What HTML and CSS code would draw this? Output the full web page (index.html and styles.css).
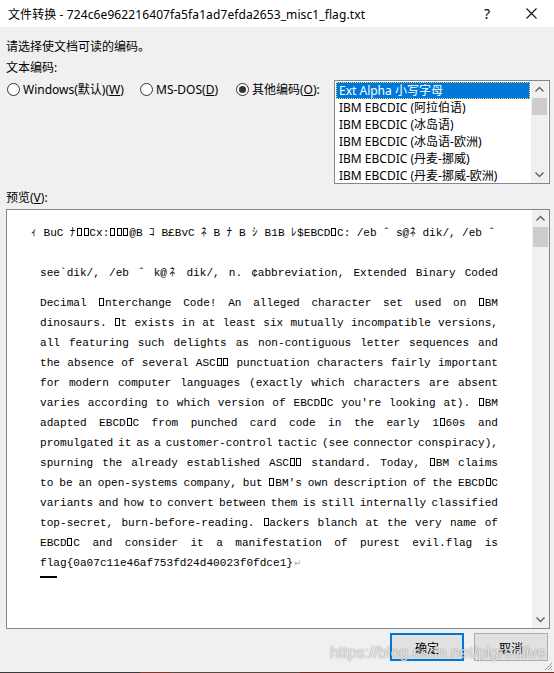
FILE: index.html
```html
<!DOCTYPE html>
<html lang="zh">
<head>
<meta charset="utf-8">
<title>文件转换</title>
<link rel="stylesheet" href="styles.css">
</head>
<body>
<div class="win">
  <div class="titlebar">
    <span class="title">文件转换 - 724c6e962216407fa5fa1ad7efda2653_misc1_flag.txt</span>
    <span class="help">?</span>
    <span class="close"><svg width="11" height="11" viewBox="0 0 11 11"><path d="M0.5 0.5L10.5 10.5M10.5 0.5L0.5 10.5" stroke="#111" stroke-width="1.1" fill="none"/></svg></span>
  </div>
  <div class="body">
    <div class="lbl l1">请选择使文档可读的编码。</div>
    <div class="lbl l2">文本编码:</div>
    <div class="row">
      <div class="radios">
        <div class="opt o1"><span class="rb"></span><span>Windows(默认)(<u>W</u>)</span></div>
        <div class="opt o2"><span class="rb"></span><span>MS-DOS(<u>D</u>)</span></div>
        <div class="opt o3"><span class="rb on"></span><span>其他编码(<u>O</u>):</span></div>
      </div>
      <div class="listbox">
        <div class="items">
          <div class="item sel">Ext Alpha 小写字母</div>
          <div class="item">IBM EBCDIC (阿拉伯语)</div>
          <div class="item">IBM EBCDIC (冰岛语)</div>
          <div class="item">IBM EBCDIC (冰岛语-欧洲)</div>
          <div class="item">IBM EBCDIC (丹麦-挪威)</div>
          <div class="item">IBM EBCDIC (丹麦-挪威-欧洲)</div>
        </div>
        <div class="sb sb-list">
          <svg class="arr" width="17" height="17" viewBox="0 0 17 17"><path d="M4.5 10.5L8.5 6.5L12.5 10.5" stroke="#606060" stroke-width="1.4" fill="none"/></svg>
          <div class="thumb t-list"></div>
          <div class="fill"></div>
          <svg class="arr" width="17" height="17" viewBox="0 0 17 17"><path d="M4.5 6.5L8.5 10.5L12.5 6.5" stroke="#606060" stroke-width="1.4" fill="none"/></svg>
        </div>
      </div>
    </div>
    <div class="lbl l3">预览(<u>V</u>):</div>
    <div class="preview">
      <div class="pv">
        <div class="ln first">ｨ BuC ﾅ<span class="tb"></span><span class="tb"></span>Cx:<span class="tb"></span><span class="tb"></span><span class="tb"></span>@B ｺ B£BvC ﾈ B ﾅ B ｼ B1B ﾚ$EBCD<span class="tb"></span>C: /eb ˆ s@ﾈ dik/, /eb ˆ</div>
        <div class="ln second">see`dik/, /eb ˆ k@ﾈ dik/, n. ¢abbreviation, Extended Binary Coded</div>
        <div class="ln">Decimal <span class="tb"></span>nterchange Code! An alleged character set used on <span class="tb"></span>BM</div>
        <div class="ln">dinosaurs. <span class="tb"></span>t exists in at least six mutually incompatible versions,</div>
        <div class="ln">all featuring such delights as non-contiguous letter sequences and</div>
        <div class="ln">the absence of several ASC<span class="tb"></span><span class="tb"></span> punctuation characters fairly important</div>
        <div class="ln">for modern computer languages (exactly which characters are absent</div>
        <div class="ln">varies according to which version of EBCD<span class="tb"></span>C you're looking at). <span class="tb"></span>BM</div>
        <div class="ln">adapted EBCD<span class="tb"></span>C from punched card code in the early 1<span class="tb"></span>60s and</div>
        <div class="ln tight3">promulgated it as a customer-control tactic (see connector conspiracy),</div>
        <div class="ln">spurning the already established ASC<span class="tb"></span><span class="tb"></span> standard. Today, <span class="tb"></span>BM claims</div>
        <div class="ln tight1">to be an open-systems company, but <span class="tb"></span>BM's own description of the EBCD<span class="tb"></span>C</div>
        <div class="ln tight2">variants and how to convert between them is still internally classified</div>
        <div class="ln">top-secret, burn-before-reading. <span class="tb"></span>ackers blanch at the very name of</div>
        <div class="ln">EBCD<span class="tb"></span>C and consider it a manifestation of purest evil.flag is</div>
        <div class="ln last">flag{0a07c11e46af753fd24d40023f0fdce1}<span class="ret">↵</span></div>
        <div class="caret"></div>
      </div>
      <div class="sb sb-pv">
        <svg class="arr" width="17" height="17" viewBox="0 0 17 17"><path d="M4.5 10.5L8.5 6.5L12.5 10.5" stroke="#606060" stroke-width="1.4" fill="none"/></svg>
        <div class="thumb t-pv"></div>
        <div class="fill"></div>
        <svg class="arr" width="17" height="17" viewBox="0 0 17 17"><path d="M4.5 6.5L8.5 10.5L12.5 6.5" stroke="#606060" stroke-width="1.4" fill="none"/></svg>
      </div>
    </div>
    <div class="buttons">
      <div class="btn def">确定</div>
      <div class="btn">取消</div>
    </div>
  </div>
  <div class="watermark">https://blog.csdn.net/pigredlive</div>
  <svg class="grip" width="9" height="9" viewBox="0 0 9 9"><path d="M8 1L1 8M8 4L4 8M8 7L7 8" stroke="#9a9a9a" stroke-width="1" fill="none"/></svg>
  <div class="edge"></div>
</div>
</body>
</html>
```
FILE: styles.css
```css
* { box-sizing: border-box; }
html, body { margin: 0; padding: 0; }
body {
  width: 554px;
  height: 673px;
  overflow: hidden;
  background: #f0f0f0;
  font-family: "Noto Sans", "Noto Sans CJK SC", sans-serif;
  font-size: 12px;
  color: #000;
}
.win { position: relative; width: 554px; height: 673px; display: flex; flex-direction: column; }
.titlebar {
  height: 27px;
  background: #fff;
  display: flex;
  align-items: center;
  padding-left: 8px;
  flex-shrink: 0;
}
.title { flex: 1; font-size: 12px; white-space: nowrap; letter-spacing: 0.1px; }
.help { width: 14px; font-size: 14px; margin-right: 32px; text-align: center; }
.close { width: 11px; height: 11px; margin-right: 17px; display: flex; }
.body { padding: 0 4px 0 6px; flex: 1; display: flex; flex-direction: column; }
.lbl { height: 21px; line-height: 21px; white-space: nowrap; }
.l1 { margin-top: 9px; }
.l2 { margin-bottom: 2px; }
.l3 { margin-top: 4px; height: 20px; line-height: 20px; margin-bottom: 1px; }
.row { display: flex; height: 104px; }
.radios { width: 328px; display: flex; height: 18px; align-items: center; }
.opt { display: flex; align-items: center; gap: 3px; white-space: nowrap; }
.o1 { margin-left: 1px; width: 133px; }
.o2 { width: 96px; }
.rb {
  width: 13px; height: 13px; border: 1px solid #333; border-radius: 50%;
  background: #fff; display: flex; align-items: center; justify-content: center;
  flex-shrink: 0;
}
.rb.on::after { content: ""; width: 7px; height: 7px; border-radius: 50%; background: #333; }
.listbox {
  width: 216px; height: 104px; border: 1px solid #828790; background: #fff;
  display: flex; padding: 1px 1px 1px 1px;
}
.items { flex: 1; overflow: hidden; }
.item { height: 17px; line-height: 17px; padding-left: 3px; white-space: nowrap; }
.item.sel { background: #0078d7; color: #fff; outline: 1px dotted #f3d38a; outline-offset: -1px; }
.sb { width: 17px; display: flex; flex-direction: column; background: #f0f0f0; flex-shrink: 0; }
.sb-list { margin: -1px 0 -1px 1px; }
.arr { display: block; flex-shrink: 0; }
.thumb { background: #cdcdcd; margin: 0 1px; flex-shrink: 0; }
.t-list { height: 17px; }
.t-pv { height: 20px; }
.fill { flex: 1; }
.preview {
  height: 420px; border: 1px solid #828790; background: #fff;
  display: flex;
}
.pv { flex: 1; padding: 13px 0 0 33px; font-family: "Liberation Mono", "DejaVu Sans Mono", "Noto Sans CJK JP", monospace; font-size: 11.1px; }
.ln { width: 458px; height: 20px; line-height: 20px; text-align: justify; text-align-last: justify; text-justify: inter-word; white-space: pre-wrap; overflow: visible; }
.tb {
  display: inline-block; width: 5px; height: 8px; border: 1px solid #000;
  margin: 0 0.84px; vertical-align: baseline;
}
.ln.first { margin-left: -9px; width: 464px; word-spacing: -1px; margin-bottom: 20px; }
.ln.second { margin-bottom: 10px; }
.ln.last { text-align: left; text-align-last: left; }
.tight1 { word-spacing: -1.3px; }
.tight2 { word-spacing: -1.9px; }
.tight3 { word-spacing: -2.2px; }
.ret { color: #a8a8a8; font-family: "DejaVu Sans", sans-serif; font-size: 9px; margin-left: 1px; }
.caret { width: 17px; height: 2px; background: #000; margin-top: 3px; }
.buttons { display: flex; justify-content: flex-end; gap: 10px; margin-top: 4px; padding-right: 2px; }
.btn {
  width: 74px; height: 28px; background: #e1e1e1; border: 1px solid #adadad;
  display: flex; align-items: center; justify-content: center;
  font-family: "Noto Sans CJK SC", sans-serif; font-size: 12px;
}
.btn.def { border: 2px solid #0078d7; }
.watermark {
  position: absolute; left: 330px; top: 644px;
  font-family: "Liberation Sans", Arial, sans-serif; font-size: 16px;
  color: rgba(255,255,255,0.8);
  text-shadow: 0 0 1px rgba(0,0,0,0.4), 0 0 2px rgba(0,0,0,0.2);
  white-space: nowrap;
}
.grip { position: absolute; right: 1px; bottom: 2px; }
.edge { position: absolute; left: 0; right: 0; bottom: 0; height: 1px; background: linear-gradient(90deg, #3a3a3a 0 140px, #7a3a2a 140px 170px, #5a4a40 170px 300px, #6b2e1e 300px); }
```
